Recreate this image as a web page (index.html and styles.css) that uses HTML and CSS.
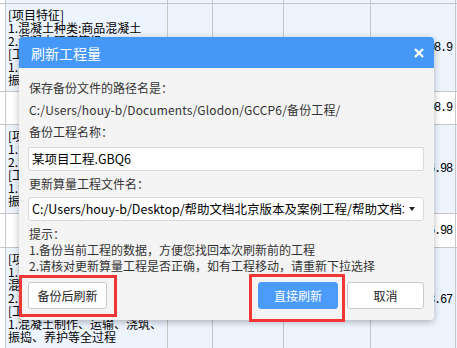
FILE: index.html
```html
<!DOCTYPE html>
<html lang="zh-CN">
<head>
    <meta charset="UTF-8">
    <title>刷新工程量</title>
    <link rel="stylesheet" href="styles.css">
</head>
<body>
    <div class="sheet">
        <div class="row blue short-top">
            <div class="cell side"></div><div class="cell"></div><div class="cell"></div><div class="cell"></div><div class="cell"></div><div class="cell"></div><div class="cell"></div>
        </div>
        <div class="row blue r1">
            <div class="cell side"></div>
            <div class="cell desc">[项目特征]<br>1.混凝土种类:商品混凝土<br>2.混凝土强度等级:C30<br>[工作内容]<br>1.混凝土制作、运输、浇筑、<br>振捣、养护等全过程</div>
            <div class="cell"></div><div class="cell"></div><div class="cell"></div>
            <div class="cell num">108.9</div>
            <div class="cell"></div>
        </div>
        <div class="row r2">
            <div class="cell side"></div><div class="cell"></div><div class="cell"></div><div class="cell"></div><div class="cell"></div>
            <div class="cell num">108.9</div>
            <div class="cell"></div>
        </div>
        <div class="row blue r3">
            <div class="cell side"></div>
            <div class="cell desc">[项目特征]<br>1.混凝土种类:商品混凝土<br>2.混凝土强度等级:C25<br>[工作内容]<br>1.混凝土制作、运输、浇筑、<br>振捣、养护等全过程</div>
            <div class="cell"></div><div class="cell"></div><div class="cell"></div>
            <div class="cell num">26.98</div>
            <div class="cell"></div>
        </div>
        <div class="row r4">
            <div class="cell side"></div><div class="cell"></div><div class="cell"></div><div class="cell"></div><div class="cell"></div>
            <div class="cell num">26.98</div>
            <div class="cell"></div>
        </div>
        <div class="row blue r5">
            <div class="cell side"></div>
            <div class="cell desc">[项目特征]<br>1.混凝土种类:泵送商品<br>混凝土<br>2.混凝土强度等级:C30<br>[工作内容]<br>1.混凝土制作、运输、浇筑、<br>振捣、养护等全过程</div>
            <div class="cell"></div><div class="cell"></div><div class="cell"></div>
            <div class="cell num">13.67</div>
            <div class="cell"></div>
        </div>
    </div>

    <!-- 刷新工程量 弹窗 -->
    <div class="dialog">
        <div class="dialog-head">
            <span class="dialog-title">刷新工程量</span>
            <svg class="close" width="10" height="10" viewBox="0 0 10 10"><path d="M1 1L9 9M9 1L1 9" stroke="#fff" stroke-width="2.4"/></svg>
        </div>
        <div class="dialog-body">
            <div class="line">保存备份文件的路径名是：</div>
            <div class="line path">C:/Users/houy-b/Documents/Glodon/GCCP6/备份工程/</div>
            <div class="line">备份工程名称：</div>
            <div class="field">某项目工程.GBQ6</div>
            <div class="line">更新算量工程文件名：</div>
            <div class="field select">
                <span class="select-text">C:/Users/houy-b/Desktop/帮助文档北京版本及案例工程/帮助文档北京版本及案例工程.GCL10</span>
                <span class="arrow"></span>
            </div>
            <div class="tips">
                <div>提示：</div>
                <div>1.备份当前工程的数据，方便您找回本次刷新前的工程</div>
                <div>2.请核对更新算量工程是否正确，如有工程移动，请重新下拉选择</div>
            </div>
            <div class="actions">
                <span class="mark mark-left"><button class="btn">备份后刷新</button></span>
                <div class="actions-right">
                    <span class="mark mark-right"><button class="btn primary">直接刷新</button></span>
                    <button class="btn cancel">取消</button>
                </div>
            </div>
        </div>
    </div>
</body>
</html>
```

FILE: styles.css
```css
body {
    margin: 0;
    background-color: #ffffff;
    font-family: "Noto Sans CJK SC", sans-serif;
    overflow: hidden;
}
.sheet {
    display: flex;
    flex-direction: column;
    gap: 1px;
    background-color: #c6c6c6;
}
.row {
    display: grid;
    grid-template-columns: 5px 161px 44px 70px 86px 84px 1fr;
    gap: 1px;
}
.cell {
    background-color: #ffffff;
}
.blue .cell {
    background-color: #edf4fe;
}
.cell.side {
    background-color: #ffffff;
}
.short-top { height: 3px; }
.r1 { height: 87px; }
.r2 { height: 32px; }
.r3 { height: 88px; }
.r4 { height: 33px; }
.r5 { height: 103px; }
.desc {
    padding: 4px 2px;
    font-size: 12px;
    line-height: 13px;
    color: #000;
    white-space: nowrap;
}
.num {
    display: flex;
    align-items: center;
    justify-content: flex-end;
    padding-right: 3px;
    font-family: "Liberation Mono", monospace;
    font-size: 12px;
    letter-spacing: -1.2px;
    color: #000;
}

.dialog {
    position: absolute;
    left: 19px;
    top: 37px;
    width: 415px;
    height: 283px;
    background-color: #f4f4f4;
    border-radius: 4px;
    box-shadow: 0 2px 7px rgba(0, 0, 0, 0.28);
}
.dialog-head {
    height: 31px;
    background-color: #4598f8;
    border-radius: 4px 4px 0 0;
    display: flex;
    align-items: center;
    justify-content: space-between;
    padding: 0 10px 0 12px;
}
.dialog-title {
    color: #ffffff;
    font-size: 14px;
}
.close {
    display: block;
}
.dialog-body {
    padding: 9px 10px 0 9px;
    font-size: 12px;
    color: #333;
}
.line {
    line-height: 22px;
    height: 22px;
    padding-left: 1px;
}
.path {
    letter-spacing: 0.15px;
}
.field {
    height: 22px;
    line-height: 22px;
    margin: 4px 0 2px;
    padding: 0 3px;
    background-color: #ffffff;
    border: 1px solid #d9d9d9;
    border-radius: 2px;
    color: #000;
    font-size: 12.5px;
}
.select {
    display: flex;
    align-items: center;
    margin-top: 2px;
    padding-right: 8px;
    border-radius: 3px;
}
.select-text {
    flex: 1;
    overflow: hidden;
    white-space: nowrap;
}
.arrow {
    width: 0;
    height: 0;
    margin-left: 5px;
    border-left: 3px solid transparent;
    border-right: 3px solid transparent;
    border-top: 4px solid #222;
}
.tips {
    margin-top: 5px;
    line-height: 16px;
    padding-left: 1px;
}
.actions {
    display: flex;
    justify-content: space-between;
    margin-top: 8px;
}
.actions-right {
    display: flex;
    gap: 9px;
}
.btn {
    display: block;
    height: 27px;
    width: 79px;
    padding: 0;
    font-family: "Noto Sans CJK SC", sans-serif;
    font-size: 12px;
    color: #222;
    background-color: #ffffff;
    border: 1px solid #c9c9c9;
    border-radius: 3px;
}
.btn.primary {
    width: 80px;
    color: #ffffff;
    background-color: #4b9bfb;
    border-color: #4b9bfb;
}
.btn.cancel {
    width: 77px;
}
/* red marker frames round the two refresh buttons */
.mark {
    display: block;
    border: 3px solid #f23535;
}
.mark-left {
    padding: 4px 7px 5px 6px;
    margin: -7px -10px -8px -9px;
}
.mark-right {
    padding: 5px 4px 10px 6px;
    margin: -8px -7px -13px -9px;
}
```
